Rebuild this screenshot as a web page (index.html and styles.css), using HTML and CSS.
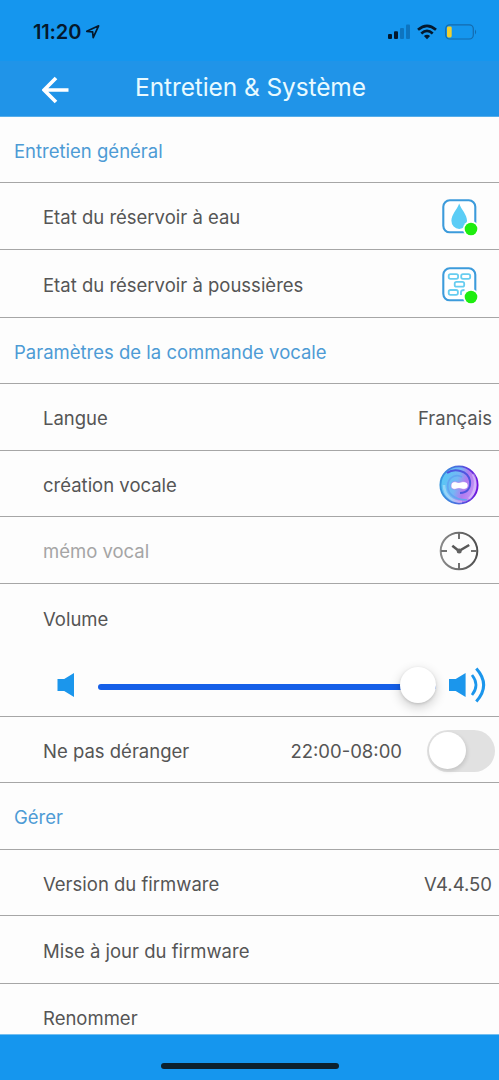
FILE: index.html
```html
<!DOCTYPE html>
<html lang="fr">
<head>
<meta charset="utf-8">
<meta name="viewport" content="width=device-width, initial-scale=1">
<title>Entretien &amp; Système</title>
<link rel="stylesheet" href="styles.css">
</head>
<body>
<div class="screen">
  <header class="status">
    <div class="clock"><span class="time">11:20</span>
      <svg class="location" width="16" height="16" viewBox="0 0 16 16"><path d="M1.8 7.3L13.6 1.8L8.2 13.6L7.6 7.8Z" fill="none" stroke="#04182c" stroke-width="1.7" stroke-linejoin="round"/></svg>
    </div>
    <div class="indicators">
      <svg width="23" height="16" viewBox="0 0 23 16"><g fill="#04182c"><rect x="0" y="10" width="4" height="5" rx="1"/><rect x="6" y="7.3" width="4" height="7.7" rx="1"/></g><g fill="#0d74c0"><rect x="12" y="4" width="4" height="11" rx="1"/><rect x="18" y="0.5" width="4" height="14.5" rx="1"/></g></svg>
      <svg class="wifi" width="20" height="16" viewBox="0 0 20 16"><g fill="none" stroke="#04182c" stroke-width="2.7"><path d="M1 5.8Q10 -2 19 5.8"/><path d="M4.3 9.4Q10 4.4 15.7 9.4"/></g><path d="M6.9 12.1Q10 9.5 13.1 12.1L10 15.3Z" fill="#04182c"/></svg>
      <svg class="battery" width="32" height="16" viewBox="0 0 32 16"><rect x="0.7" y="0.8" width="27.6" height="14.2" rx="4" fill="none" stroke="#146bae" stroke-width="1.2"/><rect x="2" y="2.4" width="4.7" height="11" rx="1.4" fill="#f2d02e"/><path d="M30 5.5Q32.3 8 30 10.5Z" fill="#146bae"/></svg>
    </div>
  </header>
  <nav class="bar">
    <svg class="back" width="28" height="28" viewBox="0 0 28 28"><path d="M26.5 14H2.5M14 2L2 14L14 26" fill="none" stroke="#fff" stroke-width="3.7"/></svg>
    <h1 class="title">Entretien &amp; Système</h1>
  </nav>
  <main class="list">
    <h2 class="row section"><span class="w-general">Entretien général</span></h2>
    <div class="row tall"><span class="label w-water">Etat du réservoir à eau</span>
      <svg class="icon" width="40" height="40" viewBox="0 0 40 40"><rect x="3.3" y="3.3" width="32" height="32" rx="6.5" fill="#fff" stroke="#3c9bdb" stroke-width="2.1"/><path d="M19.2 6.5C17 12.5 11.4 17.7 11.4 23.8A7.8 8.2 0 0 0 27 23.8C27 17.7 21.3 12.5 19.2 6.5Z" fill="#5bcdf6"/><circle cx="31" cy="32" r="8" fill="#fff"/><circle cx="31" cy="32" r="6.3" fill="#1eed10"/></svg></div>
    <div class="row taller"><span class="label w-dust">Etat du réservoir à poussières</span>
      <svg class="icon" width="40" height="40" viewBox="0 0 40 40"><rect x="3.3" y="3.3" width="32" height="32" rx="6.5" fill="#fff" stroke="#3c9bdb" stroke-width="2.1"/><g fill="none" stroke="#67cdf0" stroke-width="1.8"><rect x="8.7" y="9.2" width="9.4" height="4.6" rx="1.8"/><rect x="21.2" y="9.2" width="9" height="4.6" rx="1.8"/><rect x="14.7" y="16.9" width="9.5" height="4.8" rx="1.8"/><rect x="8.7" y="25" width="9.2" height="4.8" rx="1.8"/><path d="M21 30V27Q21 25 24.5 25"/></g><circle cx="31" cy="32" r="8" fill="#fff"/><circle cx="31" cy="32" r="6.3" fill="#1eed10"/></svg></div>
    <h2 class="row section"><span class="w-voice">Paramètres de la commande vocale</span></h2>
    <div class="row tall"><span class="label w-language">Langue</span><span class="value w-french">Français</span></div>
    <div class="row"><span class="label w-create">création vocale</span>
      <svg class="icon" width="40" height="40" viewBox="0 0 40 40"><defs><linearGradient id="ring" x1="0" y1=".35" x2="1" y2=".65"><stop offset="0" stop-color="#55c9f5"/><stop offset=".42" stop-color="#76b6f4"/><stop offset=".65" stop-color="#b27aef"/><stop offset="1" stop-color="#c79cfa"/></linearGradient><linearGradient id="edge"><stop offset="0" stop-color="#3696dd"/><stop offset=".5" stop-color="#4b67df"/><stop offset="1" stop-color="#7112dd"/></linearGradient></defs><circle cx="19" cy="20" r="18.6" fill="url(#ring)" stroke="url(#edge)" stroke-width="1.9"/><path d="M7 8C14 3 28 5 30 16C31 23 27 28 20 28" fill="none" stroke="#4e55df" stroke-width="2"/><path d="M27 35C13 35 6 27 8 18C10 11 17 9 22 12" fill="none" stroke="#63a5f2" stroke-width="1.7"/><path d="M4 20C4 31 13 37 22 37M33 9C38 18 34 29 29 34" fill="none" stroke="#ffffff" stroke-opacity=".32" stroke-width="2.6"/><path d="M11 21C11 17 14 16 17 17.2Q19 18 21 17.1C25 15.8 28 17.5 28 20.5C28 24 24 25 21 23.8Q19 23 17 23.8C14 25 11 24 11 21Z" fill="#fff" stroke="#a97bee" stroke-width=".6"/></svg></div>
    <div class="row tall-less"><span class="label muted w-memo">mémo vocal</span>
      <svg class="icon" width="40" height="40" viewBox="0 0 40 40"><defs><linearGradient id="dial"><stop offset="0" stop-color="#8a8a8a"/><stop offset="1" stop-color="#4f4f4f"/></linearGradient></defs><g fill="none" stroke="#717171" stroke-width="2"><circle cx="19" cy="20" r="18.3" stroke="url(#dial)"/><path d="M19 2V8M19 32V38M1 20H7M31 20H37"/><path d="M12.3 14.7L19 20L29.2 14" stroke="#585858" stroke-width="2.6"/></g><circle cx="19.2" cy="20" r="2.5" fill="#626262"/></svg></div>
    <section class="row volume">
      <span class="volume-label w-volume">Volume</span>
      <div class="slider">
        <svg class="quiet" width="18" height="26" viewBox="0 0 18 26"><path d="M0.5 7H7.2L17 1V25L7.2 19H0.5Z" fill="#1b96ec"/></svg>
        <div class="track"><span class="thumb"></span></div>
        <svg class="loud" width="39" height="36" viewBox="0 0 39 36"><path d="M1 12H7.7L17.6 6V30L7.7 24H1Z" fill="#1b96ec"/><g fill="none" stroke="#1b96ec"><path d="M24 8Q32 18 24 28" stroke-width="2.7"/><path d="M28.3 1.5Q43 18 28.3 34.5" stroke-width="3"/></g></svg>
      </div>
    </section>
    <div class="row"><span class="label w-dnd">Ne pas déranger</span><span class="hours w-hours">22:00-08:00</span><span class="switch"><span class="knob"></span></span></div>
    <h2 class="row tall section"><span class="w-manage">Gérer</span></h2>
    <div class="row"><span class="label w-firmware">Version du firmware</span><span class="value w-version">V4.4.50</span></div>
    <div class="row taller"><span class="label w-update">Mise à jour du firmware</span></div>
    <div class="row last"><span class="label w-rename">Renommer</span></div>
  </main>
  <footer class="bottom"><span class="home"></span></footer>
</div>
</body>
</html>
```
FILE: styles.css
```css
* { box-sizing: border-box; }
body { margin: 0; background: #fdfdfd; font-family: Inter, "Liberation Sans", sans-serif; }
.screen { width: 499px; height: 1080px; display: flex; flex-direction: column; overflow: hidden; color: #555; }
.status { height: 61px; flex: none; background: #1596ee; display: flex; justify-content: space-between; align-items: center; padding: 2px 22px 0 33px; color: #04182c; }
.clock { display: flex; align-items: center; gap: 4px; }
.time { font-size: 20px; font-weight: 600; letter-spacing: -.15px; }
.indicators { display: flex; align-items: center; }
.wifi { margin-left: 6px; }
.battery { margin-left: 8px; }
.bar { height: 56px; flex: none; background: #2094e8; border-bottom: 1px solid #56aeea; display: flex; align-items: center; padding: 0 42px; }
.back { margin-top: 3px; }
.title { margin: -4px 0 0 65px; font-size: 24.5px; font-weight: 400; letter-spacing: -.1px; color: #e8faff; white-space: nowrap; }
.list { height: 917px; flex: none; overflow: hidden; background: #fdfdfd; }
.row { height: 66px; margin: 0; border-bottom: 1px solid #a6a6a6; display: flex; align-items: center; justify-content: space-between; padding: 2px 7px 0 43px; font-size: 18.5px; font-weight: 400; white-space: nowrap; }
.row.tall, .row.tall-less { height: 67px; }
.row.taller { height: 68px; }
.section { color: #4d9bd5; padding-left: 14px; }
.muted { color: #a5a5a5; }
.icon { margin-right: 12px; overflow: visible; }
.row.volume { height: 133px; display: block; padding: 23px 11px 0 43px; }
.volume-label { display: block; line-height: 24px; }
.slider { display: flex; align-items: center; height: 36px; margin-top: 36px; padding: 0 1px 0 14px; }
.track { height: 6px; width: 338px; margin: 3px 12px 0 23px; border-radius: 3px; background: #155fe8; display: flex; align-items: center; justify-content: flex-end; }
.thumb { width: 36px; height: 36px; margin-top: -3px; border-radius: 50%; background: #fff; box-shadow: 0 4px 12px #0003, 0 1px 3px #0002; flex: none; }
.hours { margin-left: auto; margin-right: 25px; }
.switch { width: 68px; height: 42px; margin-right: -3px; border-radius: 21px; background: #e1e1e1; display: flex; align-items: center; padding: 0 2px; }
.knob { width: 37px; height: 37px; border-radius: 50%; background: #fff; box-shadow: 1px 2px 4px #0002; }
.last { border-bottom: 0; }
.bottom { flex: none; height: 46px; background: #1596ee; border-top: 1px solid #74bff0; display: flex; justify-content: center; padding-top: 28px; }
.home { width: 178px; height: 6px; border-radius: 3px; background: #0c202d; }
```
